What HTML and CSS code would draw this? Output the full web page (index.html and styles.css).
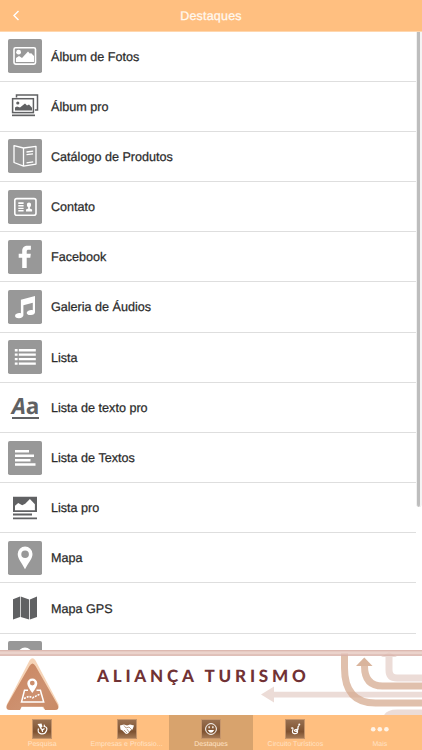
FILE: index.html
```html
<!DOCTYPE html>
<html lang="pt-BR">
<head>
<meta charset="utf-8">
<meta name="viewport" content="width=device-width">
<title>Destaques</title>
<link rel="stylesheet" href="styles.css">
</head>
<body>
<div class="app">
  <header class="header">
    <svg class="back" viewBox="0 0 8 12"><path d="M6.500 1 2 5.500 6.500 10"/></svg>
    <h1>Destaques</h1>
  </header>

  <main class="content">
    <ul class="list">
      <li class="row"><svg class="icon" viewBox="0 0 34 34"><rect class="tile" width="34" height="34" rx="1.8"/><rect class="line" x="6" y="8.7" width="21.5" height="16.4" rx="1.6"/><circle class="white" cx="10.6" cy="13.2" r="2.4"/><path class="white" d="M8 23v-4l3-2 3 2 6-6.4 2 2.2 1-.7 3 3V23z"/></svg><span class="label">Álbum de Fotos</span></li>
      <li class="row"><svg class="icon" viewBox="0 0 34 34"><path class="dark-line" d="M8.5 8.6V6.1h21v15h-2.6"/><rect class="dark-line" x="4.6" y="9.7" width="20.8" height="13.9"/><circle class="dark" cx="9.8" cy="14" r="1.6"/><path class="dark" d="M7 21.4v-3l2-1 3 1 5-4 2 2 2-1 3 3.4v2.6z"/><path class="dark" d="M4 25.5h23v1.7H4z"/></svg><span class="label">Álbum pro</span></li>
      <li class="row"><svg class="icon" viewBox="0 0 34 34"><rect class="tile" width="34" height="34" rx="1.8"/><path class="thin" d="M6 6.7 15.5 9 28 7.4v17.7l-12.5 2L6 23.5zM15.5 9v18M18.5 13l6.7-.8M18.5 15.7l6.500-.8M18.5 23.8l6.7-1"/></svg><span class="label">Catálogo de Produtos</span></li>
      <li class="row"><svg class="icon" viewBox="0 0 34 34"><rect class="tile" width="34" height="34" rx="1.8"/><rect class="line" x="6.8" y="8.6" width="21.2" height="16.6" rx="2"/><path class="white" d="M10.3 12.3h5.3V14h-5.3zM10.3 15.1h5.3v1.5h-5.3zM10.3 17.7h5.3v1.4h-5.3zM10.3 20h5.3v1.4h-5.3zM18 21.4v-2l2.2-1v-1c-2-1.8-1.6-5 .8-5s2.8 3.2.8 5v1l2.3 1v2z"/></svg><span class="label">Contato</span></li>
      <li class="row"><svg class="icon" viewBox="0 0 34 34"><rect class="tile" width="34" height="34" rx="1.8"/><path class="white" d="M14.2 28V17.8h-3.5v-4h3.5v-2.6c0-3.9 2.1-5.4 5.4-5.4h3.3v4h-2.2c-1.6 0-2 .6-2 2v2h4.1l-.5 4h-3.6V28z"/></svg><span class="label">Facebook</span></li>
      <li class="row"><svg class="icon" viewBox="0 0 34 34"><rect class="tile" width="34" height="34" rx="1.8"/><path class="white" d="M12.9 9.7 27 6.1v16.1c0 1.5-1.7 2.6-4 2.8-2.8.3-4.7-1-4.2-2.6.5-1.7 3.5-2.8 6-2.1v-7.5l-9.4 2.5v10c0 1.6-1.8 2.8-4.3 2.9-2.7.1-4.4-1.2-4-2.8.5-1.8 3.3-2.8 5.8-2.1z"/></svg><span class="label">Galeria de Áudios</span></li>
      <li class="row"><svg class="icon" viewBox="0 0 34 34"><rect class="tile" width="34" height="34" rx="1.8"/><path class="white" d="M6.8 9h2.8v2.4H6.8zM10.8 9h17v2.4h-17zM6.8 13.4h2.8v2.4H6.8zM10.8 13.4h17v2.4h-17zM6.8 17.9h2.8v2.4H6.8zM10.8 17.9h17v2.4h-17zM6.8 22.4h2.8v2.4H6.8zM10.8 22.4h17v2.4h-17z"/></svg><span class="label">Lista</span></li>
      <li class="row"><span class="icon letters"><i>A</i>a</span><span class="label">Lista de texto pro</span></li>
      <li class="row"><svg class="icon" viewBox="0 0 34 34"><rect class="tile" width="34" height="34" rx="1.8"/><path class="white" d="M7 9h14v2.5H7zM7 13.5h19V16H7zM7 18h15.5v2.5H7zM7 22.3h20.5v2.5H7z"/></svg><span class="label">Lista de Textos</span></li>
      <li class="row"><svg class="icon" viewBox="0 0 34 34"><path class="dark" d="M5 5.7h24v15.2H5zM5 22.6h19v1.8H5zM5 26.4h24v1.9H5z"/><path class="white" d="M7 19.2v-4.5l3.2-2.6 4 2.1 3-1.4 4.7-4.9 5 5.4v5.9z"/></svg><span class="label">Lista pro</span></li>
      <li class="row"><svg class="icon" viewBox="0 0 34 34"><rect class="tile" width="34" height="34" rx="1.8"/><path class="white" fill-rule="evenodd" d="M17 28.3C13.8 21.4 9.7 17.8 9.7 12.9a7.4 7.4 0 0 1 14.8 0c0 4.9-4.2 8.5-7.5 15.4M17.1 9.4a3.8 3.8 0 1 0 0 7.6 3.8 3.8 0 0 0 0-7.6"/></svg><span class="label">Mapa</span></li>
      <li class="row"><svg class="icon" viewBox="0 0 34 34"><path class="dark" d="m5 8.3 7-2.7v20.3l-7 2.7zM12.7 5.6l8.4 2.8v20.2l-8.4-2.7zM21.9 8.4 29 5.6v20.3l-7.1 2.7z"/></svg><span class="label">Mapa GPS</span></li>
      <li class="row"><svg class="icon" viewBox="0 0 34 34"><rect class="tile" width="34" height="34" rx="1.8"/><circle class="white" cx="17" cy="13.500" r="7"/></svg></li>
    </ul>
    <div class="scrollbar"></div>
  </main>

  <section class="banner">
    <svg class="art" viewBox="0 0 422 65">
      <defs><linearGradient id="sign" x1="0" y1="0" x2="1" y2="1"><stop stop-color="#ca855e"/><stop offset=".6" stop-color="#cd9170"/><stop offset="1" stop-color="#c98b66"/></linearGradient></defs>
      <path class="pink" d="M261 44.500 274 36.500v5.200h148v5.700H274v5.200z"/>
      <path class="pink-line" d="M389 5v15q0 8 8 8h25M387 67q2-4 10-4h25"/>
      <path class="pink" d="m381 7 8-5 8 5z"/>
      <path class="tan-line" d="M344.500 3v15q0 35 31 35H422M364.500 16q0 20 18 20H422"/>
      <path class="tan" d="m356 16 8.300-8.500L372.500 16z"/>
      <path class="stripe-light" d="M0 0h422v5.800H0z"/><path class="stripe" d="M0 .3h422v1H0zM0 4.500h422v1.200H0z"/>
      <path class="edge" d="M29.500 10.500Q32.500 6 35.500 10.500L58.500 54Q60 59 55 59H44l-2-2.500H22L20 59H9.500Q5 59 7 54z"/>
      <path fill="url(#sign)" d="M29.500 16Q32.500 11 35.500 16L57.500 54.500Q60 60 55 60H45l-1.500-3.200h-22L20 60H10q-5 0-3-5z"/>
      <path class="map" d="M28 40.200h-3.500L21.500 52h22.200l-3.300-11.800h-3.900"/>
      <path class="map dash" d="m24 48.500 5-2.200 3.500 1.500 8-4"/>
      <path class="white" fill-rule="evenodd" d="M32.300 43q-5-6.500-5-9.500a5 5 0 0 1 10 0q0 3-5 9.500M32.300 30.700a2.400 2.400 0 1 0 0 4.800 2.400 2.400 0 0 0 0-4.800"/>
    </svg>
    <strong class="brand">ALIANÇA TURISMO</strong>
  </section>

  <nav class="tabs">
    <a class="tab"><svg class="tab-icon" viewBox="1 1 18 18"><path class="glyph" d="M6.500 9.500Q5 14 9 14.800t5.500-3-2.500-4.300M9.500 11.500l3-2M8.500 9l2 2v2"/><path class="white" d="m5.500 5 4-.5 1 3-2 2zM12 5l1.500 2.500L11.500 8z"/></svg><span>Pesquisa</span></a>
    <a class="tab"><svg class="tab-icon" viewBox="1 1 18 18"><path class="white" d="m3 6.500 4-1 3 1 3-1 4 1-1.500 4-2 1-2.500 3-2 .5-3.500-3.500-2-1z"/><path class="crease" d="m7 6.500 2 2.500 3-1 3 3M7 11l3 3M10 10l2 3"/></svg><span>Empresas e Profissio...</span></a>
    <a class="tab active"><svg class="tab-icon" viewBox="1 1 18 18"><circle class="glyph smile" cx="10" cy="10" r="5.400"/><path class="white" d="M7.500 7.300h1.300v2H7.500zM11.200 7.300h1.300v2h-1.300zM6.900 11h6.200q-1 2.800-3.100 2.800T6.900 11"/></svg><span>Destaques</span></a>
    <a class="tab"><svg class="tab-icon" viewBox="1 1 18 18"><path class="glyph" d="M6 9.200q2.600-1 1.800 1.500-1.300 3.600 1.700 4 3.500.2 3-2.900-.5-2-2.300-1t.8 1.700q2.500-1.500 2-4.500l1-1.500"/><circle class="white" cx="14.300" cy="5.500" r="1"/></svg><span>Circuito Turísticos</span></a>
    <a class="tab"><svg class="more" viewBox="0 0 20 20"><circle cx="3.200" cy="10.300" r="2.300"/><circle cx="9.800" cy="10.300" r="2.300"/><circle cx="16.400" cy="10.300" r="2.300"/></svg><span>Mais</span></a>
  </nav>
</div>
</body>
</html>
```
FILE: styles.css
```css
* { box-sizing: border-box; }
body { margin: 0; font-family: "Liberation Sans", Arial, sans-serif; background: #fff; text-rendering: geometricPrecision; }
.app { width: 422px; height: 750px; display: flex; flex-direction: column; overflow: hidden; }
.header { height: 32px; flex: none; display: grid; grid-template-columns: 40px 1fr 40px; align-items: center; background: #ffbf80; border-bottom: 1px solid #ffd7ae; }
.back { width: 8px; height: 12px; margin-left: 12px; fill: none; stroke: #fff; stroke-width: 1.4; }
.header h1 { margin: 0; padding-top: 1px; text-align: center; font-size: 12.5px; line-height: 16px; font-weight: 400; letter-spacing: .2px; color: #fff8ee; -webkit-text-stroke: .3px #fff8ee; }
.content { flex: 1; min-height: 0; display: flex; overflow: hidden; }
.list { flex: 1; margin: -.6px 0 0; padding: 0; list-style: none; }
.row { height: 50.2px; padding-left: 8px; display: flex; align-items: center; gap: 9px; border-bottom: 1px solid #dedede; }
.icon { width: 34px; height: 34px; flex: none; }
.label { padding-top: 1px; font-size: 12.6px; line-height: 18px; letter-spacing: 0; color: #2b2b2b; -webkit-text-stroke: .25px #2b2b2b; }
.scrollbar { width: 6px; height: 475px; border-left: 1px solid #f1f1f1; border-right: 2px solid #f4f4f4; background: #bdbdbd; border-radius: 0 0 3px 3px; }
.tile { fill: #989898; }
.white { fill: #fff; }
.line { fill: none; stroke: #fff; stroke-width: 1.6; }
.thin { fill: none; stroke: #fff; stroke-width: 1.3; stroke-linejoin: round; }
.dark { fill: #606163; }
.dark-line { fill: none; stroke: #606163; stroke-width: 1.5; }
.letters { width: 27px; height: 23px; margin: 0 3px 0 4px; border-bottom: 2px solid #606163; display: flex; justify-content: center; font: 700 22.5px/19px "Open Sans", sans-serif; color: #606163; }
.banner { height: 65px; flex: none; display: grid; background: #fff; }
.art { grid-area: 1 / 1; width: 422px; height: 65px; }
.brand { grid-area: 1 / 1; margin: 14px 0 0 97px; font: 900 17px/24px Lato, sans-serif; letter-spacing: 3.8px; color: #713235; white-space: nowrap; }
.pink { fill: #ecdcd7; }
.pink-line { fill: none; stroke: #ecdcd7; stroke-width: 7; }
.tan { fill: #d9b49c; }
.tan-line { fill: none; stroke: #d4a88c; stroke-opacity: .72; stroke-width: 7; }
.stripe-light { fill: #e7cbc3; fill-opacity: .85; }
.stripe { fill: #ce9f96; fill-opacity: .65; }
.edge { fill: #f6d4b7; }
.map { fill: none; stroke: #fff; stroke-width: 1.5; }
.dash { stroke-dasharray: 2 1; }
.tabs { height: 35px; flex: none; display: grid; grid-template-columns: repeat(5, 1fr); background: #ffbf80; }
.tab { min-width: 0; padding-top: 4px; display: flex; flex-direction: column; align-items: center; gap: 1px; font-size: 7px; line-height: 10px; color: #ffe2c5; white-space: nowrap; }
.tab.active { background: #d8a36d; }
.tab-icon { width: 20px; height: 20px; flex: none; background: linear-gradient(#987050, #7e5231 65%, #a47854); border: 1px solid #c6956b; }
.glyph { fill: none; stroke: #fff; stroke-width: 1.2; }
.smile { stroke-width: 1; }
.crease { fill: none; stroke: #8a603e; stroke-width: .6; }
.more { width: 20px; height: 20px; flex: none; fill: #fff3e6; }
```
